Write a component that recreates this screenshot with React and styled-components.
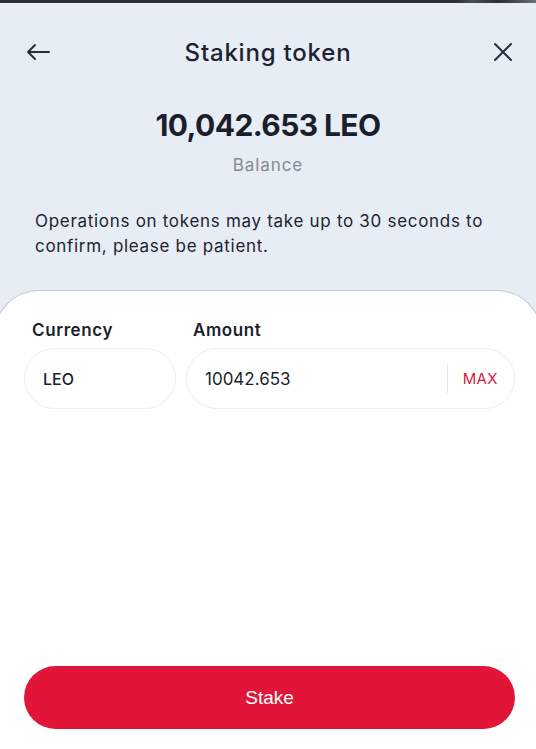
import React from "react";
import styled, { createGlobalStyle } from "styled-components";

const Global = createGlobalStyle`
  html, body { margin: 0; padding: 0; }
  body { background: #e6edf5; font-family: Inter, "Open Sans", sans-serif; }
  #root { width: 536px; height: 749px; overflow: hidden; }
`;

const hex = encodeURIComponent(
  `<svg xmlns='http://www.w3.org/2000/svg' width='56' height='48' viewBox='0 0 56 48'><path d='M14 0 L28 0 L35 12 L28 24 L14 24 L7 12 Z M42 24 L56 24 M0 24 L7 12 M35 12 L42 24 L35 36 L42 48 M14 24 L7 36 L14 48 M7 36 L-1 36 M28 24 L35 36 L28 48 M14 48 L28 48' fill='none' stroke='%23c3cedb' stroke-width='1'/></svg>`
);

const Page = styled.div`
  position: relative;
  height: 749px;
  display: flex;
  flex-direction: column;
  background-color: #e6edf5;
  background-image: linear-gradient(to bottom, #e6edf5 0px, #e6edf5 170px, rgba(230,237,245,0.35) 290px),
    url("data:image/svg+xml,${hex}");
  background-size: 100% 100%, 56px 48px;
  overflow: hidden;
`;

const TopStrip = styled.div`
  height: 3px;
  background: linear-gradient(to right, #2b2f33 0, #2b2f33 85%, #4a4f54 88%, #2b2f33 93%, #6b7075 100%);
`;

const Header = styled.header`
  display: grid;
  grid-template-columns: 60px 1fr 60px;
  align-items: center;
  height: 58px;
  margin-top: 20px;
`;

const IconButton = styled.button`
  background: none;
  border: 0;
  padding: 0;
  display: flex;
  align-items: center;
  justify-content: ${(p) => (p.$end ? "flex-end" : "flex-start")};
  padding-left: ${(p) => (p.$end ? "0" : "26px")};
  padding-right: ${(p) => (p.$end ? "23px" : "0")};
  color: #2a2e38;
  cursor: pointer;
`;

const Title = styled.h1`
  margin: 0;
  text-align: center;
  font-size: 24px;
  font-weight: 500;
  color: #1e2230;
  letter-spacing: 0.8px;
`;

const Amount = styled.div`
  margin-top: 24px;
  text-align: center;
  font-size: 30px;
  font-weight: 700;
  color: #1b1f2c;
  letter-spacing: -0.6px;
  line-height: 40px;
`;

const Sub = styled.div`
  margin-top: 8px;
  text-align: center;
  font-size: 17px;
  color: #868b93;
  line-height: 24px;
  letter-spacing: 0.9px;
`;

const Note = styled.p`
  margin: 32px 0 0;
  padding: 0 30px 0 35px;
  font-size: 17px;
  line-height: 25px;
  color: #1f2330;
  letter-spacing: 0.7px;
`;

const Sheet = styled.section`
  flex: 1;
  margin: 31px -6px 0;
  background: #fff;
  border: 1px solid #c3c8d0;
  border-bottom: 0;
  border-radius: 45px 45px 0 0;
  padding: 28px 26px 20px 29px;
  display: flex;
  flex-direction: column;
`;

const Fields = styled.div`
  display: grid;
  grid-template-columns: 152px 1fr;
  column-gap: 10px;
`;

const Field = styled.div`
  display: flex;
  flex-direction: column;
`;

const Label = styled.label`
  padding-left: ${(p) => p.$indent || "8px"};
  font-size: 17px;
  font-weight: 600;
  color: #1b1f2c;
  line-height: 22px;
  margin-bottom: 7px;
  letter-spacing: 0.6px;
`;

const InputBox = styled.div`
  height: 61px;
  box-sizing: border-box;
  border: 1px solid #eceef1;
  border-radius: 31px;
  display: flex;
  align-items: center;
  padding-left: ${(p) => p.$pad || "18px"};
  padding-right: 16px;
`;

const Value = styled.span`
  flex: 1;
  font-size: ${(p) => p.$size || "17px"};
  font-weight: ${(p) => p.$weight || 400};
  color: #1b1f2c;
`;

const Divider = styled.span`
  width: 1px;
  height: 29px;
  background: #e4e6ea;
  margin-right: 15px;
`;

const Max = styled.button`
  background: none;
  border: 0;
  padding: 0;
  font-family: inherit;
  font-size: 15px;
  color: #d8183c;
  letter-spacing: 0.4px;
  cursor: pointer;
`;

const Primary = styled.button`
  margin-top: auto;
  height: 63px;
  border: 0;
  border-radius: 32px;
  background: #e11537;
  color: #fff;
  font-family: "Liberation Sans", Arial, sans-serif;
  font-size: 19px;
  cursor: pointer;
`;

const ArrowLeft = () => (
  <svg width="24" height="18" viewBox="0 0 24 18" fill="none" stroke="currentColor" strokeWidth="2" strokeLinecap="round" strokeLinejoin="round">
    <path d="M23 9H2M9 2L2 9l7 7" />
  </svg>
);

const Close = () => (
  <svg width="20" height="20" viewBox="0 0 20 20" fill="none" stroke="currentColor" strokeWidth="2" strokeLinecap="round">
    <path d="M2 2l16 16M18 2L2 18" />
  </svg>
);

export default function App() {
  return (
    <>
      <Global />
      <Page>
        <TopStrip />
        <Header>
          <IconButton aria-label="Back"><ArrowLeft /></IconButton>
          <Title>Staking token</Title>
          <IconButton $end aria-label="Close"><Close /></IconButton>
        </Header>
        <Amount>10,042.653 LEO</Amount>
        <Sub>Balance</Sub>
        <Note>Operations on tokens may take up to 30 seconds to confirm, please be patient.</Note>
        <Sheet>
          <Fields>
            <Field>
              <Label>Currency</Label>
              <InputBox>
                <Value $size="16px" $weight={500}>LEO</Value>
              </InputBox>
            </Field>
            <Field>
              <Label $indent="7px">Amount</Label>
              <InputBox>
                <Value>10042.653</Value>
                <Divider />
                <Max>MAX</Max>
              </InputBox>
            </Field>
          </Fields>
          <Primary>Stake</Primary>
        </Sheet>
      </Page>
    </>
  );
}
